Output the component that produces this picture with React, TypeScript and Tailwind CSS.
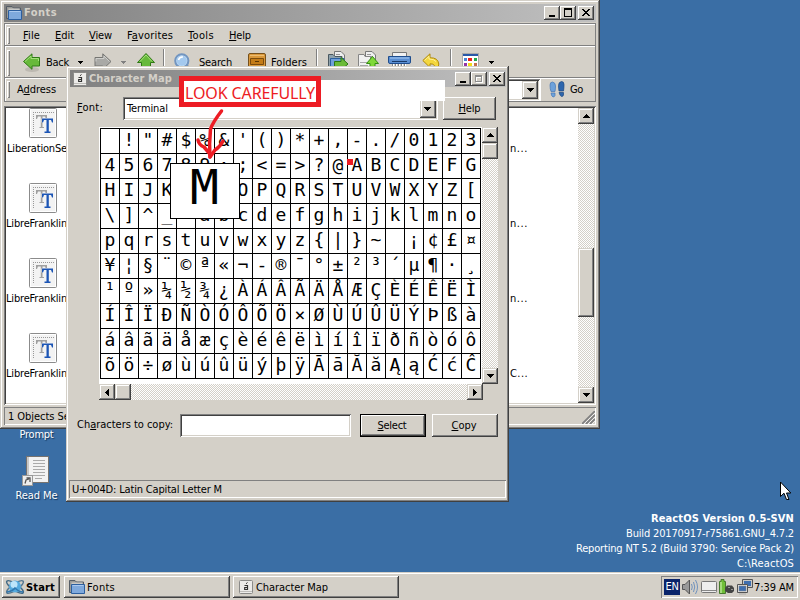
import React, { useLayoutEffect, useRef, useState } from 'react';

const RAISED =
  'bg-[#d4d0c8] shadow-[inset_-1px_-1px_#404040,inset_1px_1px_#fff,inset_-2px_-2px_#808080]';
const SCROLL_RAISED =
  'bg-[#d4d0c8] shadow-[inset_-1px_-1px_#404040,inset_1px_1px_#d4d0c8,inset_-2px_-2px_#808080,inset_2px_2px_#fff]';
const SUNKEN =
  'shadow-[inset_1px_1px_#808080,inset_-1px_-1px_#fff,inset_2px_2px_#404040,inset_-2px_-2px_#d4d0c8]';
const THIN_SUNKEN = 'shadow-[inset_1px_1px_#808080,inset_-1px_-1px_#fff]';
const TRACK = 'bg-[repeating-conic-gradient(#fff_0_25%,#d4d0c8_0_50%)] bg-[length:2px_2px]';

/* One line of text, tracked so that it takes exactly w pixels. */
function Label({ w, className = '', children }: { w: number; className?: string; children: React.ReactNode }) {
  const ref = useRef<HTMLSpanElement>(null);
  const [spacing, setSpacing] = useState(0);
  useLayoutEffect(() => {
    const el = ref.current;
    if (!el) return;
    const n = (el.textContent || '').length;
    setSpacing((w - el.getBoundingClientRect().width) / n);
  }, [w]);
  return (
    <span ref={ref} className={`inline-block shrink-0 whitespace-pre ${className}`} style={{ letterSpacing: spacing }}>
      {children}
    </span>
  );
}

function Tri({ dir, color = '#000' }: { dir: 'up' | 'down' | 'left' | 'right'; color?: string }) {
  const horizontal = dir === 'up' || dir === 'down';
  const points = {
    up: '0,4 7,4 4,0 3,0',
    down: '0,0 7,0 4,4 3,4',
    left: '4,0 4,7 0,4 0,3',
    right: '0,0 0,7 4,4 4,3',
  }[dir];
  return (
    <svg width={horizontal ? 7 : 4} height={horizontal ? 4 : 7} shapeRendering="crispEdges" className="shrink-0">
      <polygon points={points} fill={color} />
    </svg>
  );
}

function SmallTri({ color = '#000', className = '' }: { color?: string; className?: string }) {
  return (
    <svg width="5" height="3" shapeRendering="crispEdges" className={`shrink-0 ${className}`}>
      <path d="M0 0H5V1H4V2H3V3H2V2H1V1H0Z" fill={color} />
    </svg>
  );
}

function CaptionButtons({ disabledMax = false }: { disabledMax?: boolean }) {
  return (
    <div className="ml-auto flex">
      <div className={`h-[14px] w-4 ${RAISED}`}>
        <svg width="16" height="14" shapeRendering="crispEdges"><path d="M5 9H11V11H5Z" /></svg>
      </div>
      <div className={`h-[14px] w-4 ${RAISED}`}>
        <svg width="16" height="14" shapeRendering="crispEdges">
          {disabledMax && <path d="M5 4H12V11H5ZM6 6V10H11V6Z" fill="#fff" fillRule="evenodd" />}
          <path
            d={disabledMax ? 'M4 3H11V10H4ZM5 5V9H10V5Z' : 'M4 2H12V11H4ZM5 4V10H11V4Z'}
            fill={disabledMax ? '#8c8c8c' : '#000'}
            fillRule="evenodd"
          />
        </svg>
      </div>
      <div className={`ml-[2px] h-[14px] w-4 ${RAISED}`}>
        <svg width="16" height="14" shapeRendering="crispEdges">
          <path d="M4 3H6V4H7V5H9V4H10V3H12V4H11V5H10V6H9V7H10V8H11V9H12V10H10V9H9V8H7V9H6V10H4V9H5V8H6V7H7V6H6V5H5V4H4Z" />
        </svg>
      </div>
    </div>
  );
}

function FolderIcon() {
  return (
    <svg width="16" height="16" viewBox="0 0 16 16" className="shrink-0">
      <path d="M.5 13.500V1.500H6L7.500 3H14.500V13.500Z" fill="#9a9a96" stroke="#555d66" />
      <path d="M2.500 3.500H13.500V8H2.500Z" fill="#c9c9c6" />
      <path d="M2.500 5.500H15.500V14.500H2.500Z" fill="#7fa9dc" stroke="#2c5f9f" />
      <path d="M3.500 6.500H14.500" stroke="#abc9ee" />
    </svg>
  );
}

function CharMapIcon() {
  return (
    <svg width="14" height="14" viewBox="0 0 14 14" className="shrink-0">
      <rect x=".5" y=".5" width="13" height="13" rx="1" fill="#ecebe9" stroke="#8a8a88" />
      <path d="M1 11.500H13" stroke="#bdbcb9" />
      <path d="M5.500 5.500H8.500V9.500H5.700V7.500H8" stroke="#333" strokeWidth="1.200" fill="none" />
      <path d="M7 3.800L8.500 2.500" stroke="#333" />
    </svg>
  );
}

function FontFileIcon() {
  return (
    <svg width="28" height="31" viewBox="0 0 28 31">
      <rect x=".5" y=".5" width="27" height="29" rx="1" fill="#f3f3f3" stroke="#8b8b8b" />
      <rect x="1.500" y="1.500" width="25" height="27" fill="none" stroke="#fff" />
      <path d="M4 4.500H25M4.500 4V26" stroke="#999" strokeDasharray="1 1" fill="none" />
      <path d="M7 7H18V11H17L16 8.500H13.500V19H15V20H10.500V19H11.800V8.500H9L8 11H7Z" fill="#a0a0a0" />
      <path d="M13 10.500H24V14.500H23L22 12H19.800V23.500H21.500V25H15.500V23.500H17.500V12H15L14 14.500H13Z" fill="#f3f3f3" stroke="#f3f3f3" strokeWidth="1" />
      <path d="M13 10.500H24V14.500H23L22 12H19.800V23.500H21.500V25H15.500V23.500H17.500V12H15L14 14.500H13Z" fill="#1c55b5" />
    </svg>
  );
}

function ArrowIcon({ kind }: { kind: 'back' | 'forward' | 'up' }) {
  const green = kind !== 'forward';
  return (
    <svg width="20" height="22" viewBox="0 0 20 22" className="shrink-0">
      <ellipse cx="10" cy="17.500" rx="7" ry="2.500" fill="#77736c" opacity=".25" />
      <path
        d={
          kind === 'back'
            ? 'M1.500 9.500L10 1.800V5.500H17.500V14H10V17.300Z'
            : kind === 'forward'
              ? 'M18 9.500L9.800 1.800V5.500H2V14H9.800V17.300Z'
              : 'M10 1.500L18.500 10.500H14.500V19H5.500V10.500H1.500Z'
        }
        fill={green ? '#67b93a' : '#a9a9a6'}
        stroke={green ? '#2f7a14' : '#757572'}
      />
      <path
        d={
          kind === 'back'
            ? 'M3 9.500L9 4V6.500H16.500V9'
            : kind === 'forward'
              ? 'M3 9.500V6.500H11V4L16.500 9.500'
              : 'M4 9.500L10 3L16 9.500'
        }
        fill="none"
        stroke={green ? '#a5e07c' : '#cfcfcc'}
      />
    </svg>
  );
}

function SearchIcon() {
  return (
    <svg width="18" height="20" viewBox="0 0 18 20" className="shrink-0">
      <path d="M12 12L16.500 17" stroke="#8e9299" strokeWidth="3" />
      <circle cx="7.800" cy="7.800" r="6.600" fill="#c0dcf4" stroke="#7295c0" strokeWidth="2" />
      <circle cx="7.800" cy="7.800" r="5" fill="#a4c9ee" />
      <path d="M4.500 7A4 4 0 0 1 9 4" stroke="#fff" strokeWidth="1.500" fill="none" />
    </svg>
  );
}

function DrawerIcon() {
  return (
    <svg width="18" height="20" viewBox="0 0 18 20" className="shrink-0">
      <path d="M.5 2Q.5 .5 2 .5H16Q17.500 .5 17.500 2V19H.5Z" fill="#d9983b" stroke="#76501c" />
      <path d="M2.500 5.500H15.500V11.500H2.500ZM2.500 13.500H15.500V19H2.500Z" fill="#c47c17" stroke="#7b4b0c" />
      <path d="M2 2.500H16" stroke="#edbd72" />
      <path d="M7 8.500H11" stroke="#5b3604" />
    </svg>
  );
}

function CopyToIcon({ up = false }: { up?: boolean }) {
  return (
    <svg width="22" height="22" viewBox="0 0 22 22" className="shrink-0">
      <path d="M7.500 12.500V.5H14L17.500 4V12.500Z" fill="#eee" stroke="#777" />
      <path d="M9 3.500H13M9 5.500H15M9 7.500H15" stroke="#999" />
      {up ? (
        <>
          <path d="M.5 3.500H6L7 5.500H12.500V19.500H.5Z" fill="#f1f1f1" stroke="#868686" />
          <path d="M2 11.500H10M2 14.500H10" stroke="#a9a9a9" />
          <path d="M14.500 5.500L20.500 12.500H17V20H12V12.500H8.500Z" fill="#80d938" stroke="#358d13" />
        </>
      ) : (
        <>
          <path d="M1.500 3.500H6L8 5.500H15V19.500H1.500Z" fill="#8fa2ac" stroke="#4b5961" />
          <path d="M3.500 7.500H17V19.500H3.500Z" fill="#6f9fda" stroke="#2c5f9f" />
          <path d="M7.500 10.500H14V6.500L21 13L14 19V15.500H7.500Z" fill="#6cbb38" stroke="#2b7815" />
        </>
      )}
    </svg>
  );
}

function ShredderIcon() {
  return (
    <svg width="23" height="22" viewBox="0 0 23 22" className="shrink-0">
      <path d="M4.500 8V.5H18.500V8Z" fill="#f2f2f2" stroke="#777" />
      <path d="M.5 4.500H22.500V10Q22.500 11.500 21 11.500H2Q.5 11.500 .5 10Z" fill="#5b8fd2" stroke="#1f4d8d" />
      <path d="M2 6H21" stroke="#a8caf3" />
      <path d="M4 9.500H19" stroke="#183967" />
      <path d="M5.500 12V20M8.500 12V20M11.500 12V20M14.500 12V20M17.500 12V20" stroke="#fff" />
      <path d="M4.500 12V20M7.500 12V20M10.500 12V20M13.500 12V20M16.500 12V20" stroke="#888" />
    </svg>
  );
}

function UndoIcon() {
  return (
    <svg width="18" height="20" viewBox="0 0 18 20" className="shrink-0">
      <path d="M.8 7.500L8 .8V4.800Q16 4.500 16.800 11Q17 15 13.500 19Q14.500 10.500 8 10.800V14.500Z" fill="#f4d73e" stroke="#b08a0c" />
      <path d="M2.500 7.500L7 3.300V6Q12 6 14 8.500" fill="none" stroke="#fff09a" />
    </svg>
  );
}

function ViewsIcon() {
  return (
    <svg width="17" height="19" viewBox="0 0 17 19" className="shrink-0" shapeRendering="crispEdges">
      <path d="M0 0H17V19H0Z" fill="#aaa" />
      <path d="M1 1H16V18H1Z" fill="#fff" />
      <path d="M1 1H16V3H1Z" fill="#2858a8" />
      <path d="M2 5H5V8H2Z" fill="#4b83d3" />
      <path d="M6 5H10V8H6Z" fill="#e62020" />
      <path d="M12 5H15V8H12Z" fill="#1fa94b" />
      <path d="M2 10H5V13H2Z" fill="#9435a6" />
      <path d="M6 10H10V13H6Z" fill="#f1dc19" />
      <path d="M12 10H15V13H12Z" fill="#c46f4b" />
    </svg>
  );
}

function FeetIcon() {
  return (
    <svg width="16" height="17" viewBox="0 0 16 17" className="shrink-0">
      <path d="M1 4Q1 1 3.500 1Q6.500 1.500 6.500 5Q6.500 8 6 10.500H2Q1 8 1 4ZM2 12H6V14.500Q5.500 16 4 16Q2.500 15.500 2 12Z" fill="#6ea2db" stroke="#4676b3" strokeWidth=".7" />
      <path d="M15 3.500Q15 .5 12.500 .5Q9.500 1 9.500 4.500Q9.500 7 10 10H14.500Q15 7 15 3.500ZM10 11.500H14.500V14Q14 15.700 12.500 15.500Q11 15 10 11.500Z" fill="#2e66ad" stroke="#1b4680" strokeWidth=".7" />
    </svg>
  );
}

function Sep({ className = '' }: { className?: string }) {
  return <div className={`h-7 w-[2px] shrink-0 border-r border-white bg-[#808080] ${className}`} />;
}

function Grip() {
  return <div className="ml-[2px] h-[17px] w-[3px] shrink-0 shadow-[inset_1px_1px_#fff,inset_-1px_-1px_#808080]" />;
}

function FontsWindow() {
  const files = [
    ['LiberationSe', 60, 'n...', 18],
    ['LibreFranklin', 61, 'n...', 18],
    ['LibreFranklin', 61, 'n...', 18],
    ['LibreFranklin', 61, 'C...', 18],
  ] as const;
  return (
    <div className="absolute left-0 top-0 flex h-[429px] w-[600px] flex-col bg-[#d4d0c8] p-1 shadow-[inset_-1px_-1px_#404040,inset_1px_1px_#d4d0c8,inset_-2px_-2px_#808080,inset_2px_2px_#fff]">
      <div className="flex h-[18px] shrink-0 items-center bg-linear-to-r from-[#808080] to-[#c0c0c0] pl-[2px] pr-[2px]">
        <FolderIcon />
        <Label w={33} className="ml-[2px] font-bold text-[#d4d0c8]">Fonts</Label>
        <CaptionButtons />
      </div>
      <div className="mt-px flex h-[79px] shrink-0 flex-col border border-[#808080]">
        <div className="flex h-[22px] shrink-0 items-center border-b border-[#808080] pt-px shadow-[inset_1px_1px_#fff]">
          <Grip />
          <Label w={17} className="ml-[13px] mt-px"><u>F</u>ile</Label>
          <Label w={19} className="ml-[15px] mt-px"><u>E</u>dit</Label>
          <Label w={23} className="ml-[15px] mt-px"><u>V</u>iew</Label>
          <Label w={46} className="ml-[15px] mt-px">F<u>a</u>vorites</Label>
          <Label w={26} className="ml-[15px] mt-px"><u>T</u>ools</Label>
          <Label w={22} className="ml-[15px] mt-px"><u>H</u>elp</Label>
        </div>
        <div className="flex h-8 shrink-0 items-center border-b border-[#808080] pt-[2px] shadow-[inset_1px_1px_#fff]">
          <div className="ml-[2px] h-[26px] w-[3px] shrink-0 shadow-[inset_1px_1px_#fff,inset_-1px_-1px_#808080]" />
          <div className="ml-3 flex items-center">
            <ArrowIcon kind="back" />
            <Label w={23} className="ml-1">Back</Label>
            <SmallTri className="ml-[9px]" />
          </div>
          <div className="ml-[10px] flex items-center">
            <ArrowIcon kind="forward" />
            <SmallTri color="#808080" className="ml-2" />
          </div>
          <div className="ml-[10px]"><ArrowIcon kind="up" /></div>
          <Sep className="ml-[7px]" />
          <div className="ml-[9px]"><SearchIcon /></div>
          <Label w={33} className="ml-[7px]">Search</Label>
          <div className="ml-4"><DrawerIcon /></div>
          <Label w={36} className="ml-[5px]">Folders</Label>
          <Sep className="ml-[9px]" />
          <div className="-mt-[2px] ml-[9px]"><CopyToIcon /></div>
          <div className="-mt-[2px] ml-[9px]"><CopyToIcon up /></div>
          <div className="ml-2"><ShredderIcon /></div>
          <div className="ml-[11px]"><UndoIcon /></div>
          <Sep className="ml-[10px]" />
          <div className="ml-[10px]"><ViewsIcon /></div>
          <SmallTri className="ml-[10px]" />
        </div>
        <div className="flex grow items-center shadow-[inset_1px_1px_#fff]">
          <Grip />
          <Label w={39} className="ml-[7px] mt-px">A<u>d</u>dress</Label>
          <div className={`ml-3 flex h-[22px] grow bg-white p-[2px] ${SUNKEN}`}>
            <div className={`ml-auto flex h-[18px] w-4 items-center justify-center ${SCROLL_RAISED}`}><Tri dir="down" /></div>
          </div>
          <div className="flex h-[22px] w-[55px] shrink-0 items-center border-l border-white">
            <div className="ml-[8px]"><FeetIcon /></div>
            <Label w={13} className="ml-[5px] mt-px">Go</Label>
          </div>
        </div>
      </div>
      <div className={`mt-[4px] flex h-[299px] shrink-0 bg-white p-[2px] ${SUNKEN}`}>
        <div className="flex grow flex-col overflow-hidden">
          {files.map(([name, w, tail, tw], i) => (
            <div key={i} className="flex h-[75px] shrink-0 items-start">
              <div className="flex w-[74px] shrink-0 flex-col items-start">
                <div className="ml-[23px] h-[34px]"><FontFileIcon /></div>
                <Label w={w} className={i === 0 ? 'ml-px' : ''}>{name}</Label>
              </div>
              <Label w={tw} className="ml-[430px] mt-[34px]">{tail}</Label>
            </div>
          ))}
        </div>
        <div className={`flex w-4 shrink-0 flex-col ${TRACK}`}>
          <div className={`flex h-4 items-center justify-center ${SCROLL_RAISED}`}><Tri dir="up" /></div>
          <div className={`mt-[124px] h-[69px] ${SCROLL_RAISED}`} />
          <div className={`mt-auto flex h-4 items-center justify-center ${SCROLL_RAISED}`}><Tri dir="down" /></div>
        </div>
      </div>
      <div className={`mt-[2px] flex h-[18px] shrink-0 items-center pl-1 ${THIN_SUNKEN}`}>
        <Label w={92} className="mt-px">1 Objects Selected</Label>
        <svg width="13" height="13" className="mb-[-3px] ml-auto mr-px">
          <path d="M0 13L13 0M4 13L13 4M8 13L13 8" stroke="#808080" strokeWidth="1.800" />
          <path d="M2 13L13 2M6 13L13 6M10 13L13 10" stroke="#fff" strokeWidth=".7" />
        </svg>
      </div>
    </div>
  );
}

const ROWS = [
  ' !"#$%&\'()*+,-./0123',
  '456789:;<=>?@ABCDEFG',
  'HIJKLMNOPQRSTUVWXYZ[',
  '\\]^_`abcdefghijklmno',
  'pqrstuvwxyz{|}~ ¡¢£¤',
  '¥¦§¨©ª«¬-®¯°±²³´µ¶·¸',
  '¹º»¼½¾¿ÀÁÂÃÄÅÆÇÈÉÊËÌ',
  'ÍÎÏÐÑÒÓÔÕÖ×ØÙÚÛÜÝÞßà',
  'áâãäåæçèéêëìíîïðñòóô',
  'õö÷øùúûüýþÿĀāĂăĄąĆćĈ',
];

function CharacterMap() {
  return (
    <div className="absolute left-[66px] top-[66px] flex h-[436px] w-[443px] flex-col bg-[#d4d0c8] p-1 pr-[3px] shadow-[inset_-1px_-1px_#404040,inset_1px_1px_#d4d0c8,inset_-2px_-2px_#808080,inset_2px_2px_#fff]">
      <div className="flex h-[17px] shrink-0 items-center bg-linear-to-r from-[#808080] to-[#c0c0c0] pl-[3px] pr-px">
        <CharMapIcon />
        <Label w={83} className="ml-[2px] font-bold text-[#d4d0c8]">Character Map</Label>
        <CaptionButtons disabledMax />
      </div>
      <div className="ml-[7px] mt-[10px] flex h-[23px] shrink-0 items-center">
        <Label w={26} className="mb-[2px]"><u>F</u>ont:</Label>
        <div className={`ml-5 flex h-[23px] w-[315px] items-center bg-white p-[2px] ${SUNKEN}`}>
          <Label w={41} className="ml-[2px]">Terminal</Label>
          <div className={`ml-auto flex h-[19px] w-4 items-center justify-center ${SCROLL_RAISED}`}><Tri dir="down" /></div>
        </div>
        <div className={`ml-[5px] flex h-[23px] w-[53px] items-center justify-center ${RAISED}`}>
          <Label w={22}><u>H</u>elp</Label>
        </div>
      </div>
      <div className="ml-[29px] mt-[7px] flex h-[273px] w-[399px] shrink-0 flex-col bg-white">
        <div className="flex h-[257px]">
          <div className="ml-px mt-px grid h-[251px] w-[381px] grid-cols-[repeat(20,19px)] grid-rows-[repeat(10,25px)] border-b border-r border-black">
            {ROWS.flatMap((row, r) =>
              [...row].map((ch, c) => (
                <div
                  key={`${r}-${c}`}
                  className="flex items-center justify-center overflow-hidden whitespace-pre border-l border-t border-black font-['DejaVu_Sans_Mono',monospace] text-[18px] leading-[22px] pb-[2px]"
                >
                  {ch}
                </div>
              )),
            )}
          </div>
          <div className={`ml-auto flex w-4 flex-col ${TRACK}`}>
            <div className={`flex h-4 items-center justify-center ${SCROLL_RAISED}`}><Tri dir="up" /></div>
            <div className={`h-4 ${SCROLL_RAISED}`} />
            <div className={`mt-auto flex h-4 items-center justify-center ${SCROLL_RAISED}`}><Tri dir="down" /></div>
          </div>
        </div>
        <div className="flex h-4 bg-[#d4d0c8]">
          <div className={`flex h-4 w-[384px] ${TRACK}`}>
            <div className={`flex w-4 items-center justify-center ${SCROLL_RAISED}`}><Tri dir="left" /></div>
            <div className={`w-4 ${SCROLL_RAISED}`} />
            <div className={`ml-auto flex w-4 items-center justify-center ${SCROLL_RAISED}`}><Tri dir="right" /></div>
          </div>
        </div>
      </div>
      <div className="ml-[7px] mt-[14px] flex h-[23px] shrink-0 items-center">
        <Label w={96} className="mb-px">Ch<u>a</u>racters to copy:</Label>
        <div className={`ml-[7px] h-[23px] w-[171px] bg-white ${SUNKEN}`} />
        <div className="ml-[9px] h-[23px] w-[66px] bg-black p-px">
          <div className={`flex h-full items-center justify-center ${RAISED}`}><Label w={29} className="-ml-[2px]"><u>S</u>elect</Label></div>
        </div>
        <div className={`ml-[6px] flex h-[23px] w-[66px] items-center justify-center ${RAISED}`}>
          <Label w={25} className="-ml-[2px]"><u>C</u>opy</Label>
        </div>
      </div>
      <div className={`-ml-px mt-auto flex h-[18px] shrink-0 items-center pl-[3px] pt-[2px] ${THIN_SUNKEN}`}>
        <Label w={150}>U+004D: Latin Capital Letter M</Label>
      </div>
    </div>
  );
}

function Annotations() {
  return (
    <>
      <div className="absolute left-[315px] top-[80px] h-[21px] w-[130px] bg-white" />
      <div className="absolute left-[179px] top-[76px] flex h-[31px] w-[142px] items-center border-[5px] border-[#ed1c24] bg-white pl-px">
        <Label w={130} className="mt-[2px] font-['Noto_Sans','DejaVu_Sans',sans-serif] text-[16px] leading-none text-[#ed1c24]">LOOK CAREFULLY</Label>
      </div>
      <div className="absolute left-[347px] top-[159px] size-[6px] bg-[#ed1c24]" />
      <div className="absolute left-[170px] top-[163px] flex h-14 w-[70px] items-center justify-center border border-black bg-white pb-[9px] pr-px font-['DejaVu_Sans_Mono',monospace] text-[48px] leading-none">
        M
      </div>
      <svg className="absolute left-[190px] top-[104px]" width="40" height="60" fill="none" stroke="#ed1c24" strokeWidth="3.500" strokeLinecap="round" strokeLinejoin="round">
        <path d="M31.500 7Q23 18 20.500 25Q19 40 20 53" />
        <path d="M8 36Q9 41 14 43L20 50V53L25 46Q30 43 33 37" />
      </svg>
    </>
  );
}

function Desktop() {
  const shadow = '[text-shadow:1px_1px_1px_#14365c]';
  return (
    <>
      <div className="absolute left-0 top-[428px] flex w-[73px] flex-col items-center text-white">
        <Label w={34} className={shadow}>Prompt</Label>
        <svg width="30" height="32" viewBox="0 0 30 32" className="mt-[13px]">
          <rect x="4.500" y="1.500" width="22" height="26" fill="#f2f2f2" stroke="#77736f" />
          <path d="M6 2V27" stroke="#c9c9c9" strokeWidth="2" />
          <path d="M11 5.500H23M11 8.500H23M11 11.500H23M11 14.500H23M11 17.500H23M11 20.500H23M13 23.500H20" stroke="#aaa" />
          <rect x=".5" y="20.500" width="10" height="10" fill="#eee" stroke="#999" />
          <path d="M3 28.500L4 25L7 24M4.500 23H8V27" stroke="#555" strokeWidth="1.300" fill="none" />
        </svg>
        <Label w={42} className={`mt-[2px] ${shadow}`}>Read Me</Label>
      </div>
      <div className="absolute right-[6px] top-[511px] flex flex-col items-end leading-[15px] text-white">
        <Label w={143} className="font-bold">ReactOS Version 0.5-SVN</Label>
        <Label w={168}>Build 20170917-r75861.GNU_4.7.2</Label>
        <Label w={218}>Reporting NT 5.2 (Build 3790: Service Pack 2)</Label>
        <Label w={57}>C:\ReactOS</Label>
      </div>
      <svg className="absolute left-[780px] top-[481px]" width="12" height="20" viewBox="0 0 12 20">
        <path d="M.5 1V15.500L4 12.200L6.500 18.500H9L6.500 12H10.800Z" fill="#fff" stroke="#000" />
      </svg>
    </>
  );
}

function Taskbar() {
  return (
    <div className="absolute inset-x-0 bottom-0 flex h-7 items-start border-t border-[#d4d0c8] bg-[#d4d0c8] pl-[2px] pr-[2px] pt-[3px] shadow-[inset_0_1px_#fff]">
      <div className={`flex h-[22px] w-[58px] items-center pl-[3px] ${RAISED}`}>
        <svg width="20" height="18" viewBox="0 0 20 18" className="shrink-0">
          <ellipse cx="10" cy="9" rx="10" ry="3.200" transform="rotate(35 10 9)" fill="none" stroke="#446a85" strokeWidth="1.400" />
          <ellipse cx="10" cy="9" rx="10" ry="3.200" transform="rotate(-35 10 9)" fill="none" stroke="#557790" strokeWidth="1.400" />
          <circle cx="10" cy="8.500" r="6" fill="#55aade" />
          <circle cx="9" cy="6.500" r="3.500" fill="#bde5fa" />
          <path d="M2 14Q8 13 10 10Q14 14 18 14" stroke="#2f78b0" strokeWidth="1.500" fill="none" />
        </svg>
        <Label w={29} className="ml-px mt-px font-bold">Start</Label>
      </div>
      <div className={`ml-1 flex h-[22px] w-[166px] items-center pl-[5px] ${RAISED}`}>
        <FolderIcon />
        <Label w={28} className="ml-[2px] mt-px">Fonts</Label>
      </div>
      <div className={`ml-[3px] flex h-[22px] w-[166px] items-center pl-[6px] ${RAISED}`}>
        <CharMapIcon />
        <Label w={72} className="ml-[3px] mt-px">Character Map</Label>
      </div>
      <div className={`ml-auto flex h-[22px] w-[137px] items-center pl-[3px] ${THIN_SUNKEN}`}>
        <div className="flex h-4 w-4 items-center justify-center bg-[#0a246a] text-white"><Label w={13}>EN</Label></div>
        <svg width="17" height="16" viewBox="0 0 17 16" className="ml-[2px]">
          <path d="M.5 5.500H3L7.500 1V15L3 10.500H.5Z" fill="#999" stroke="#555" />
          <path d="M9.500 5Q11 8 9.500 11M11.500 3Q14 8 11.500 13M13.500 1Q17.500 8 13.500 15" stroke="#6f92bd" fill="none" />
        </svg>
        <svg width="16" height="12" viewBox="0 0 16 12" className="ml-[2px]">
          <rect x=".5" y=".5" width="15" height="11" rx="1" fill="#eee" stroke="#777" />
          <path d="M1 9.500H15" stroke="#888" />
        </svg>
        <svg width="17" height="16" viewBox="0 0 17 16" className="ml-px">
          <path d="M1.500 2.500H3V.5H6V2.500H7.500V14.500H1.500Z" fill="#70bf38" stroke="#477a2d" />
          <path d="M3 3V14" stroke="#d9f5c0" />
          <path d="M7 9L9 6.500H14L16 9V12L14 14H10L7 12Z" fill="#444" />
          <path d="M10 8.500H12M13 10.500H15" stroke="#999" />
        </svg>
        <svg width="16" height="16" viewBox="0 0 16 16" className="ml-[2px]">
          <path d="M5.500 .5H15.500V8.500H5.500Z" fill="#c9c9c6" stroke="#555" />
          <path d="M7 2H14V7H7Z" fill="#3f6fb0" />
          <path d="M.5 5.500H10.500V13.500H.5Z" fill="#ddd" stroke="#555" />
          <path d="M2 7H9V12H2ZM2 15H9" fill="#3f6fb0" stroke="#888" strokeWidth=".5" />
        </svg>
        <Label w={40} className="ml-px mt-[2px]">7:39 AM</Label>
      </div>
    </div>
  );
}

export default function App() {
  return (
    <div className="relative h-[600px] w-[800px] overflow-hidden bg-[#3a6ea5] font-['DejaVu_Sans_Condensed','DejaVu_Sans',sans-serif] text-[11px] leading-[14px] text-black">
      <Desktop />
      <FontsWindow />
      <CharacterMap />
      <Annotations />
      <Taskbar />
    </div>
  );
}
